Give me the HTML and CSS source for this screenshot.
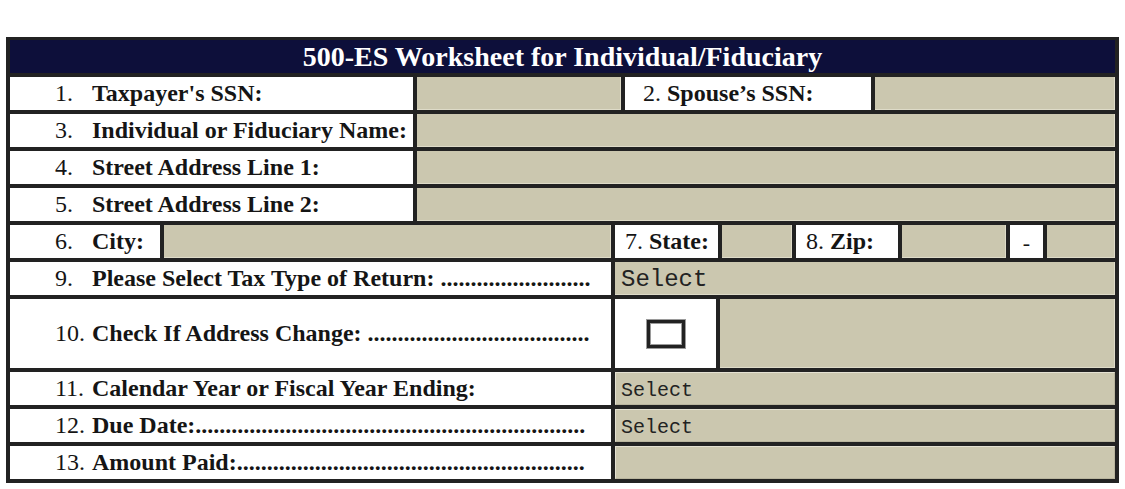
FILE: index.html
```html
<!DOCTYPE html>
<html lang="en">
<head>
    <meta charset="UTF-8">
    <meta name="viewport" content="width=device-width, initial-scale=1.0">
    <title>500-ES Worksheet</title>
    <link rel="stylesheet" href="styles.css">
</head>
<body>
    <form class="sheet">
        <div class="title">500-ES Worksheet for Individual/Fiduciary</div>

        <div class="row row-ssn">
            <div class="cell label"><span class="num">1.</span>Taxpayer's SSN:</div>
            <div class="cell field"><input type="text" id="ssn"></div>
            <div class="cell label spouse"><span><span class="plain">2.</span> Spouse’s SSN:</span></div>
            <div class="cell field"><input type="text" id="spouse-ssn"></div>
        </div>

        <div class="row row-wide">
            <div class="cell label"><span class="num">3.</span>Individual or Fiduciary Name:</div>
            <div class="cell field"><input type="text" id="name"></div>
        </div>

        <div class="row row-wide">
            <div class="cell label"><span class="num">4.</span>Street Address Line 1:</div>
            <div class="cell field"><input type="text" id="address1"></div>
        </div>

        <div class="row row-wide">
            <div class="cell label"><span class="num">5.</span>Street Address Line 2:</div>
            <div class="cell field"><input type="text" id="address2"></div>
        </div>

        <div class="row row-city">
            <div class="cell label"><span class="num">6.</span>City:</div>
            <div class="cell field"><input type="text" id="city"></div>
            <div class="cell label short"><span><span class="plain">7.</span> State:</span></div>
            <div class="cell field"><input type="text" id="state"></div>
            <div class="cell label short"><span><span class="plain">8.</span> Zip:</span></div>
            <div class="cell field"><input type="text" id="zip"></div>
            <div class="cell label dash">-</div>
            <div class="cell field"><input type="text" id="zip4"></div>
        </div>

        <div class="row row-half">
            <div class="cell label"><span class="num">9.</span>Please Select Tax Type of Return: .........................</div>
            <div class="cell field">
                <select id="tax-type" class="big">
                    <option>Select</option>
                </select>
            </div>
        </div>

        <div class="row row-check">
            <div class="cell label"><span class="num">10.</span>Check If Address Change: .....................................</div>
            <div class="cell box"><input type="checkbox" id="address-change"></div>
            <div class="cell field"></div>
        </div>

        <div class="row row-half">
            <div class="cell label"><span class="num">11.</span>Calendar Year or Fiscal Year Ending:</div>
            <div class="cell field">
                <select id="year-ending" class="framed">
                    <option>Select</option>
                </select>
            </div>
        </div>

        <div class="row row-half">
            <div class="cell label"><span class="num">12.</span>Due Date:.................................................................</div>
            <div class="cell field">
                <select id="due-date" class="framed">
                    <option>Select</option>
                </select>
            </div>
        </div>

        <div class="row row-half">
            <div class="cell label"><span class="num">13.</span>Amount Paid:..........................................................</div>
            <div class="cell field"><input type="text" id="amount" class="framed"></div>
        </div>
    </form>
</body>
</html>
```

FILE: styles.css
```css
body {
    margin: 0;
    background: #fff;
    font-family: 'Liberation Serif', 'Times New Roman', serif;
    color: #151515;
}
.sheet {
    width: 1105px;
    margin: 37px 0 0 6px;
    padding: 3px 4px 4px;
    background: #222;
    display: grid;
    gap: 4px;
}
.title {
    height: 33px;
    background: #0d0f3a;
    color: #fff;
    font-size: 28px;
    font-weight: 700;
    text-align: center;
    line-height: 33px;
}
.row {
    display: grid;
    gap: 4px;
    height: 33px;
}
.row-ssn {
    grid-template-columns: 403px 204px 246px 240px;
}
.row-wide {
    grid-template-columns: 403px 698px;
}
.row-city {
    grid-template-columns: 150px 447px 103px 70px 102px 104px 33px 68px;
}
.row-half {
    grid-template-columns: 601px 500px;
}
.row-check {
    grid-template-columns: 601px 101px 395px;
    height: 69px;
}
.cell {
    display: flex;
    align-items: center;
    min-width: 0;
}
.label {
    background: #fff;
    padding-left: 45px;
    font-size: 24px;
    font-weight: 700;
    white-space: nowrap;
    overflow: hidden;
}
.num {
    display: inline-block;
    width: 37px;
    font-weight: 400;
}
.plain {
    font-weight: 400;
}
.label.spouse {
    padding-left: 18px;
}
.label.short {
    padding-left: 10px;
}
.label.dash {
    padding: 3px 0 0;
    justify-content: center;
    font-weight: 400;
    font-size: 22px;
}
.field {
    background: #cbc7af;
    box-shadow: inset -1px -1px 0 #dedbc8;
}
.field input,
.field select {
    width: 100%;
    height: 100%;
    box-sizing: border-box;
    margin: 0;
    border: none;
    background: transparent;
    font-family: 'Liberation Mono', 'Courier New', monospace;
    color: #222;
    outline: none;
    appearance: none;
    -webkit-appearance: none;
    border-radius: 0;
}
.field select {
    padding: 0 0 0 6px;
}
.field select.big {
    font-size: 24px;
    padding-top: 2px;
}
.field .framed {
    font-size: 20px;
    padding: 4px 0 0 5px;
    border: 1px solid #e4e1d2;
    border-right-color: #b9b59e;
    border-bottom-color: #b9b59e;
}
.box {
    background: #fff;
    justify-content: center;
}
.box input {
    appearance: none;
    -webkit-appearance: none;
    width: 38px;
    height: 28px;
    margin: 0;
    border: 3px solid #222;
    border-radius: 0;
    background: #fff;
    box-shadow: 0 0 0 1px #9a9a9a, inset 0 0 0 1px #9a9a9a;
}
```
